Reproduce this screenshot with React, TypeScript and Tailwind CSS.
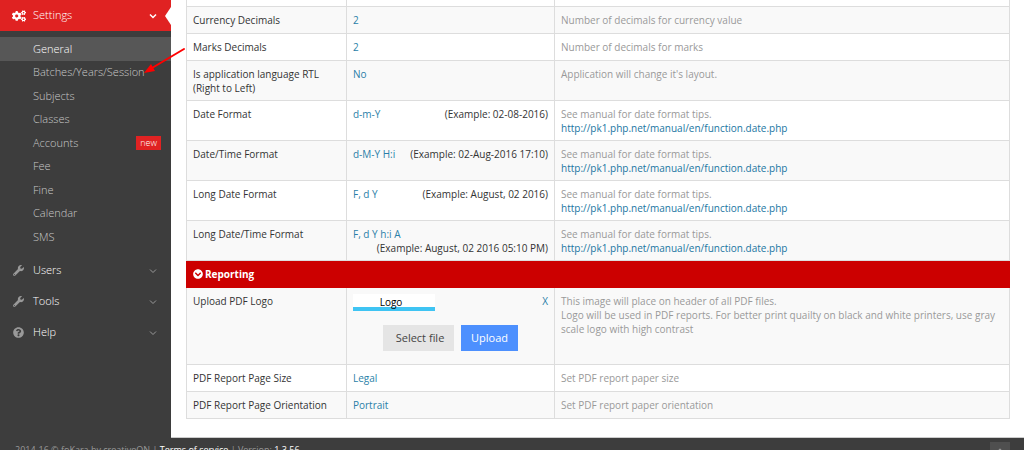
import React from 'react';
import { FaAngleUp, FaChevronCircleDown, FaCogs, FaQuestionCircle, FaWrench } from 'react-icons/fa';

const MENU = ['General', 'Batches/Years/Session', 'Subjects', 'Classes', 'Accounts', 'Fee', 'Fine', 'Calendar', 'SMS'];

const SECTIONS = [
  { name: 'Users', icon: FaWrench },
  { name: 'Tools', icon: FaWrench },
  { name: 'Help', icon: FaQuestionCircle },
];

const DATE_MANUAL = 'http://pk1.php.net/manual/en/function.date.php';

type Setting = { label: string; value: string; example?: string; hint: string; manual?: boolean };

const GENERAL: Setting[] = [
  { label: 'Currency Decimals', value: '2', hint: 'Number of decimals for currency value' },
  { label: 'Marks Decimals', value: '2', hint: 'Number of decimals for marks' },
  { label: 'Is application language RTL (Right to Left)', value: 'No', hint: "Application will change it's layout." },
  { label: 'Date Format', value: 'd-m-Y', example: '02-08-2016', hint: 'See manual for date format tips.', manual: true },
  { label: 'Date/Time Format', value: 'd-M-Y H:i', example: '02-Aug-2016 17:10', hint: 'See manual for date format tips.', manual: true },
  { label: 'Long Date Format', value: 'F, d Y', example: 'August, 02 2016', hint: 'See manual for date format tips.', manual: true },
  { label: 'Long Date/Time Format', value: 'F, d Y h:i A', example: 'August, 02 2016 05:10 PM', hint: 'See manual for date format tips.', manual: true },
];

const REPORTING: Setting[] = [
  { label: 'PDF Report Page Size', value: 'Legal', hint: 'Set PDF report paper size' },
  { label: 'PDF Report Page Orientation', value: 'Portrait', hint: 'Set PDF report paper orientation' },
];

const CELL = 'border border-[#dddddd] px-[6px] pt-[6px] pb-[5px] align-top text-left font-normal';

const Chevron: React.FC<{ className: string }> = ({ className }) => (
  <svg className={`h-[6px] w-2 ${className}`} viewBox="0 0 8 6" fill="none" stroke="currentColor">
    <path d="M1 1.5l3 3 3-3" />
  </svg>
);

const Sidebar: React.FC = () => (
  <nav className="w-[171px] shrink-0 text-[11px]">
    <a href="#" className="relative flex h-[31px] items-center bg-[#e02222] pl-3 pr-[14px] text-white">
      <FaCogs className="mr-[7px] h-[14px] w-[14px]" />
      <span className="flex-1 font-light">Settings</span>
      <Chevron className="stroke-[1.5]" />
      {/* Active notch */}
      <svg className="absolute right-0 top-[7px] h-[18px] w-[6px]" viewBox="0 0 6 18">
        <path d="M6 0L0 9l6 9z" fill="#fff" />
      </svg>
    </a>

    <ul className="my-[6px] flex h-[212px] flex-col font-light">
      {MENU.map((item) => (
        <li key={item} className="flex-1">
          <a
            href="#"
            className={`flex h-full items-center justify-between pl-[33px] pr-[10px] ${
              item === 'General' ? 'bg-[#575757] text-white' : 'text-[#c8c8c8]'
            }`}
          >
            {item}
            {item === 'Accounts' && (
              <span className="bg-[#e02222] px-1 text-[9px] leading-[14px] text-white">new</span>
            )}
          </a>
        </li>
      ))}
    </ul>

    {SECTIONS.map(({ name, icon: Icon }) => (
      <a key={name} href="#" className="flex h-[31px] items-center pl-[13px] pr-[14px] text-white">
        <Icon className="mr-[9px] h-[11px] w-[11px] text-[#999999]" />
        <span className="flex-1 font-light">{name}</span>
        <Chevron className="text-[#999999]" />
      </a>
    ))}
  </nav>
);

const SettingRow: React.FC<{ row: Setting }> = ({ row }) => (
  <tr className="h-[27px] odd:bg-white even:bg-[#f9f9f9]">
    <th scope="row" className={CELL}>{row.label}</th>
    <td className={CELL}>
      <div className="flex flex-wrap justify-between">
        <a href="#" className="text-[#2a7fa8]">{row.value}</a>
        {row.example && <span className="ml-auto">(Example: {row.example})</span>}
      </div>
    </td>
    <td className={`${CELL} text-[#999999]`}>
      {row.hint}
      {row.manual && <a href={DATE_MANUAL} className="block text-[#1a76a2]">{DATE_MANUAL}</a>}
    </td>
  </tr>
);

const UploadRow: React.FC = () => (
  <tr className="h-[77px] bg-[#f9f9f9]">
    <th scope="row" className={CELL}>Upload PDF Logo</th>
    <td className={CELL}>
      <div className="flex items-start justify-between">
        <div className="h-[17px] w-[82px] border-b-4 border-[#3fc4f3] bg-white pr-[6px] text-center leading-[16px] text-black">
          Logo
        </div>
        <a href="#" className="text-[#2a7fa8]">X</a>
      </div>
      <div className="mt-[14px] ml-[30px] flex gap-[7px] text-[11px]">
        <button type="button" className="h-[26px] w-[71px] bg-[#e5e5e5] pl-[3px] text-[#444444]">Select file</button>
        <button type="button" className="h-[26px] w-[57px] bg-[#4d90fe] text-white">Upload</button>
      </div>
    </td>
    <td className={`${CELL} text-[#999999]`}>
      This image will place on header of all PDF files.<br />
      Logo will be used in PDF reports. For better print quailty on black and white printers, use gray scale logo with high contrast
    </td>
  </tr>
);

export default function App() {
  return (
    <div className="relative h-screen overflow-hidden bg-[#3d3d3d] font-['Open_Sans',sans-serif]">
      <div className="flex">
        <Sidebar />

        <main className="min-w-0 flex-1 border-b border-[#cccccc] bg-white pb-[18px] pl-[15px] pr-[14px]">
          <table className="w-full table-fixed border-collapse text-[10px] leading-[14px] text-[#333333]">
            <colgroup>
              <col className="w-[160px]" />
              <col className="w-[208px]" />
              <col />
            </colgroup>
            <tbody>
              <tr className="h-[6px]">
                <td className="border-x border-[#dddddd]" />
                <td className="border-x border-[#dddddd]" />
                <td className="border-x border-[#dddddd]" />
              </tr>
              {GENERAL.map((row) => <SettingRow key={row.label} row={row} />)}
              <tr className="h-[27px] bg-[#cc0000] text-white">
                <th colSpan={3} className="border border-[#cc0000] px-[6px] text-left font-bold">
                  <span className="flex items-center gap-[2px]">
                    <FaChevronCircleDown className="h-[10px] w-[10px]" />
                    Reporting
                  </span>
                </th>
              </tr>
              <UploadRow />
              {REPORTING.map((row) => <SettingRow key={row.label} row={row} />)}
            </tbody>
          </table>
        </main>
      </div>

      <footer className="flex items-start justify-between pl-[15px] pr-[14px] pt-1 text-[9px] text-[#999999]">
        <p className="pt-px leading-[14px]">
          2014-16 © foKara by creativeON | <a href="#" className="text-white">Terms of service</a> | Version:{' '}
          <span className="text-white">1.3.56</span>
        </p>
        <button type="button" aria-label="Back to top" className="flex h-5 w-5 justify-center bg-[#4f4f4f] pt-[3px]">
          <FaAngleUp className="h-3 w-3" />
        </button>
      </footer>

      {/* Pointer to the session menu item */}
      <svg className="absolute left-[142px] top-[46px] h-[30px] w-[46px]" viewBox="0 0 46 30">
        <path d="M42 3L10 22" stroke="#f00" strokeWidth="2" strokeLinecap="round" />
        <path d="M2 27L9 18l4 7z" fill="#f00" />
      </svg>
    </div>
  );
}
